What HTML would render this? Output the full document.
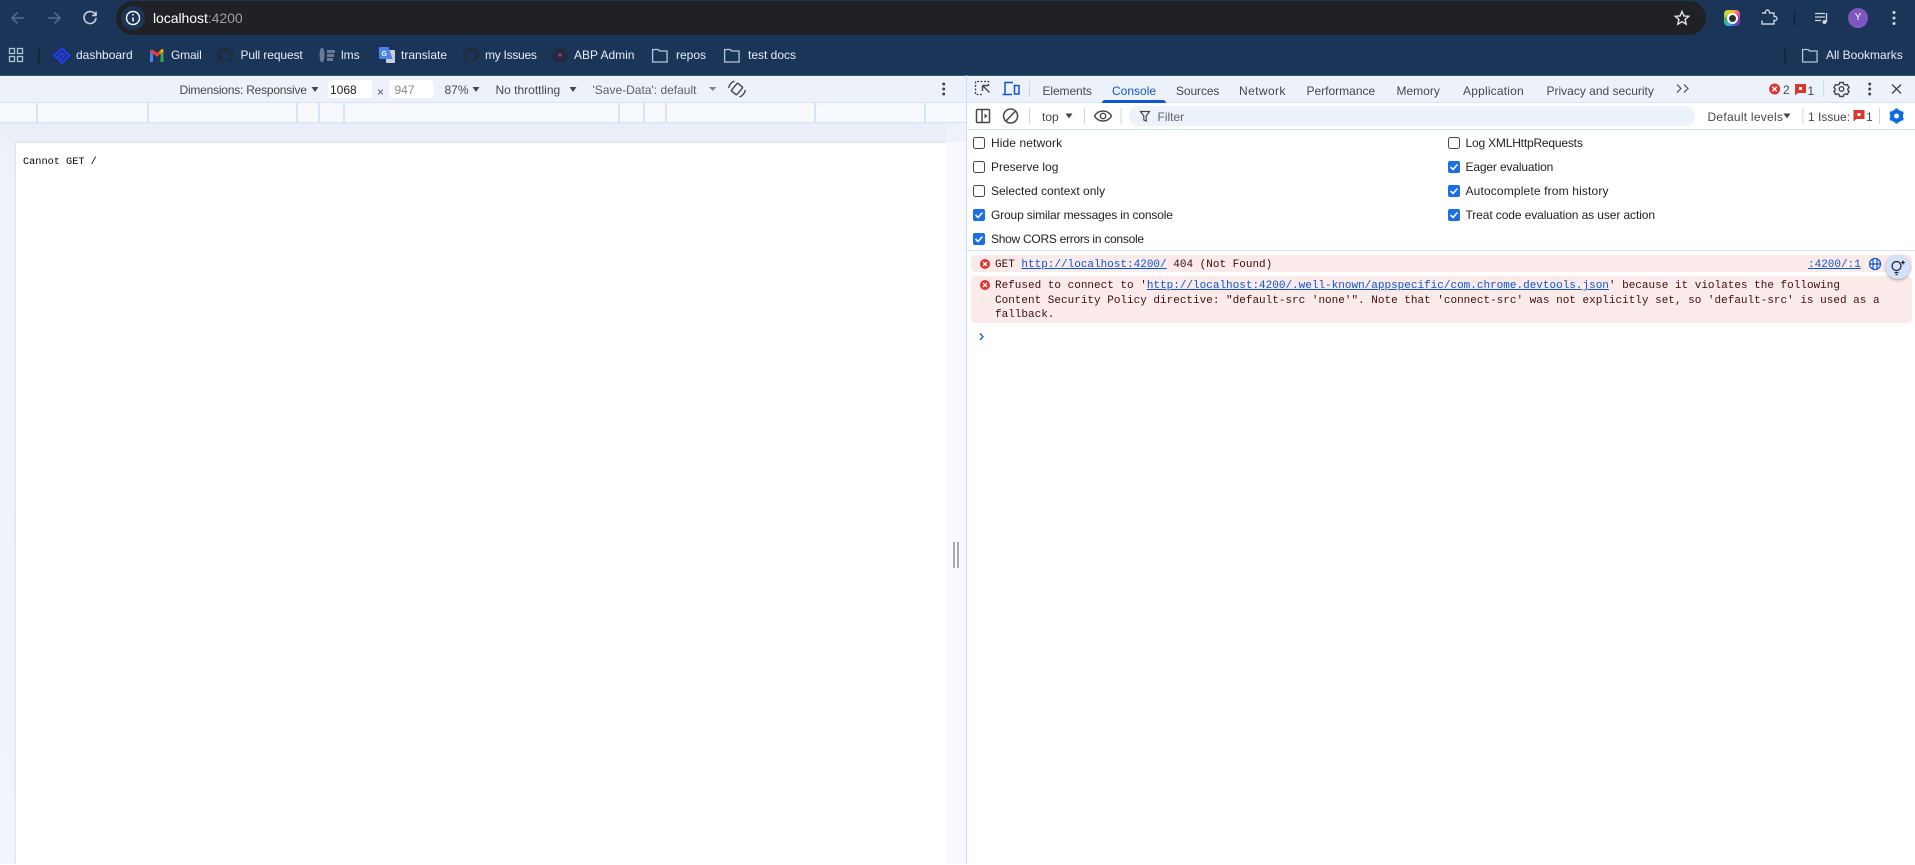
<!DOCTYPE html>
<html><head><meta charset="utf-8"><title>localhost:4200</title>
<style>
html,body{margin:0;padding:0;width:1915px;height:864px;overflow:hidden;background:#fff;font-family:"Liberation Sans",sans-serif;font-size:12px;color:#1f1f1f}
.b{position:absolute}
.t{position:absolute;white-space:nowrap;line-height:16px;height:16px}
.m{font-family:"Liberation Mono",monospace;font-size:11px;color:#410e0b}
.m a{color:#0b57d0;text-decoration:underline}
.w{color:#e8edf4}
.tb{color:#474747}
.dv{position:absolute;width:2px;top:103px;height:19px;background:#d3e3fd}
svg{position:absolute;left:0;top:0}
</style></head><body>
<div class="b" style="left:0;top:0;width:1915px;height:75px;background:#1a3558"></div>
<div class="b" style="left:116px;top:1px;width:1590px;height:34px;border-radius:17px;background:#202124"></div>
<div class="b" style="left:121px;top:6px;width:24px;height:24px;border-radius:12px;background:#1a3558"></div>
<div class="t" style="left:153px;top:10px;font-size:14px;color:#fff;letter-spacing:-.05px">localhost<span style="color:#9aa0a6">:4200</span></div>

<div class="t w" style="left:76px;top:47px">dashboard</div>
<div class="t w" style="left:171px;top:47px;letter-spacing:-.15px">Gmail</div>
<div class="t w" style="left:240.5px;top:47px;letter-spacing:-.1px">Pull request</div>
<div class="t w" style="left:341px;top:47px">lms</div>
<div class="t w" style="left:401px;top:47px">translate</div>
<div class="t w" style="left:485px;top:47px;letter-spacing:-.27px">my Issues</div>
<div class="t w" style="left:574px;top:47px">ABP Admin</div>
<div class="t w" style="left:676px;top:47px">repos</div>
<div class="t w" style="left:748px;top:47px">test docs</div>
<div class="t w" style="left:1826px;top:47px">All Bookmarks</div>

<div class="b" style="left:0;top:75px;width:967px;height:27px;background:#edf2fa;border-top:1px solid #3a5474;box-sizing:border-box"></div>
<div class="b" style="left:0;top:102px;width:967px;height:21px;background:#f8f9ff;border-top:1px solid #d3e3fd;border-bottom:1px solid #d3e3fd;box-sizing:border-box"></div>
<div class="dv" style="left:36px"></div><div class="dv" style="left:147px"></div><div class="dv" style="left:296px"></div><div class="dv" style="left:318px"></div><div class="dv" style="left:343px"></div><div class="dv" style="left:618px"></div><div class="dv" style="left:643px"></div><div class="dv" style="left:665px"></div><div class="dv" style="left:814px"></div><div class="dv" style="left:924px"></div>
<div class="b" style="left:0;top:123px;width:946px;height:741px;background:linear-gradient(#e9eef6,#eef2f9 30px,#f1f4fa)"></div>
<div class="b" style="left:946px;top:123px;width:20px;height:741px;background:#f8f9ff"></div>
<div class="b" style="left:946px;top:123px;width:20px;height:19px;background:#eef2f9"></div>
<div class="b" style="left:966px;top:75px;width:1px;height:789px;background:#c9dcf9"></div>
<div class="b" style="left:16px;top:142.500px;width:930px;height:722px;background:#fff;box-shadow:-1px -1px 1px rgba(0,0,0,.08)"></div>
<div class="t" style="left:23px;top:154px;font-family:'Liberation Mono',monospace;font-size:10.25px;color:#000">Cannot GET /</div>
<div class="b" style="left:953px;top:542px;width:2px;height:26px;background:#a8a9a8"></div>
<div class="b" style="left:957px;top:542px;width:2px;height:26px;background:#a8a9a8"></div>

<div class="t tb" style="left:179.500px;top:82px;letter-spacing:-.22px">Dimensions: Responsive</div>
<div class="b" style="left:328px;top:80px;width:44px;height:18px;background:#fff;border-radius:4px"></div>
<div class="b" style="left:389px;top:80px;width:44.500px;height:18px;background:#fff;border-radius:4px"></div>
<div class="t" style="left:330px;top:82px">1068</div>
<div class="t" style="left:377px;top:84px;color:#555">×</div>
<div class="t" style="left:394.500px;top:82px;color:#8a8a8a">947</div>
<div class="t tb" style="left:444.500px;top:82px">87%</div>
<div class="t tb" style="left:495.500px;top:82px">No throttling</div>
<div class="t tb" style="left:592.500px;top:82px;color:#5f5f5f">'Save-Data': default</div>

<div class="b" style="left:967px;top:75px;width:948px;height:27px;background:#edf2fa;border-top:1px solid #3a5474;box-sizing:border-box"></div>
<div class="b" style="left:967px;top:102px;width:948px;height:1px;background:#d3e3fd"></div>
<div class="b" style="left:967px;top:129px;width:948px;height:1px;background:#d3e3fd"></div>
<div class="b" style="left:967px;top:250px;width:948px;height:1px;background:#d3e3fd"></div>
<div class="t tb" style="left:1042.500px;top:83px;letter-spacing:-.1px">Elements</div>
<div class="t" style="left:1112px;top:83px;color:#0b57d0">Console</div>
<div class="b" style="left:1102px;top:100px;width:64px;height:3px;background:#0b57d0;border-radius:3px 3px 0 0"></div>
<div class="t tb" style="left:1176px;top:83px;letter-spacing:-.1px">Sources</div>
<div class="t tb" style="left:1239px;top:83px;letter-spacing:.4px">Network</div>
<div class="t tb" style="left:1306.500px;top:83px">Performance</div>
<div class="t tb" style="left:1396.500px;top:83px">Memory</div>
<div class="t tb" style="left:1463px;top:83px;letter-spacing:.2px">Application</div>
<div class="t tb" style="left:1546.500px;top:83px">Privacy and security</div>
<div class="t tb" style="left:1783px;top:82px">2</div>
<div class="t tb" style="left:1807.500px;top:83px">1</div>

<div class="t tb" style="left:1042px;top:109px">top</div>
<div class="b" style="left:1129px;top:106px;width:566px;height:20px;border-radius:10px;background:#edf2fa"></div>
<div class="t" style="left:1157.500px;top:109px;color:#5f6368">Filter</div>
<div class="t tb" style="left:1707.500px;top:109px;letter-spacing:.26px">Default levels</div>
<div class="t tb" style="left:1808px;top:109px">1 Issue:</div>
<div class="t tb" style="left:1866px;top:109px">1</div>

<div class="t" style="left:991px;top:135px;letter-spacing:.1px">Hide network</div>
<div class="t" style="left:991px;top:159px">Preserve log</div>
<div class="t" style="left:991px;top:183px">Selected context only</div>
<div class="t" style="left:991px;top:207px;letter-spacing:-.15px">Group similar messages in console</div>
<div class="t" style="left:991px;top:231px;letter-spacing:-.27px">Show CORS errors in console</div>
<div class="t" style="left:1465.500px;top:135px;letter-spacing:-.19px">Log XMLHttpRequests</div>
<div class="t" style="left:1465.500px;top:159px;letter-spacing:-.15px">Eager evaluation</div>
<div class="t" style="left:1465.500px;top:183px;letter-spacing:.15px">Autocomplete from history</div>
<div class="t" style="left:1465.500px;top:207px;letter-spacing:-.1px">Treat code evaluation as user action</div>

<div class="b" style="left:971px;top:255px;width:941px;height:17px;background:#fbeaea;border-radius:4px"></div>
<div class="b" style="left:971px;top:276px;width:941px;height:47px;background:#fbeaea;border-radius:4px"></div>
<div class="t m" style="left:995px;top:257px">GET <a>http://localhost:4200/</a> 404 (Not Found)</div>
<div class="t m" style="left:1808px;top:257px"><a>:4200/:1</a></div>
<div class="t m" style="left:995px;top:278px">Refused to connect to '<a>http://localhost:4200/.well-known/appspecific/com.chrome.devtools.json</a>' because it violates the following</div>
<div class="t m" style="left:995px;top:293px">Content Security Policy directive: "default-src 'none'". Note that 'connect-src' was not explicitly set, so 'default-src' is used as a</div>
<div class="t m" style="left:995px;top:307px">fallback.</div>
<div class="b" style="left:1886px;top:255px;width:24px;height:24px;border-radius:12px;background:#d3e3fd;box-shadow:0 1px 3px rgba(0,0,0,.35)"></div>

<div class="b" style="left:1724px;top:10px;width:16px;height:16px;border-radius:4px;background:conic-gradient(#f5c518,#f06292,#9c27b0,#3f51b5,#29b6f6,#4caf50,#cddc39,#f5c518)"></div>
<div class="b" style="left:1726.500px;top:12.500px;width:7px;height:7px;border-radius:50%;background:#263238;border:2px solid #fff"></div>
<div class="b" style="left:1848px;top:8px;width:20px;height:20px;border-radius:50%;background:#7e57c2"></div>
<div class="t" style="left:1848px;top:10px;width:20px;text-align:center;color:#fff;font-size:10px">Y</div>

<svg width="1915" height="864" viewBox="0 0 1915 864" fill="none">
<!-- nav -->
<g stroke="#516c8e" stroke-width="1.500">
<path d="M24 18H12.500M17.500 12.500L12 18l5.500 5.500"/>
<path d="M48 18h11.500M54.500 12.500L60 18l-5.500 5.500"/>
</g>
<path d="M95.200 14.500A6 6 0 1 0 96 18M96 11.500v4h-4" stroke="#c7cdd5" stroke-width="1.600"/>
<circle cx="133" cy="18" r="6.500" stroke="#fff" stroke-width="1.400"/>
<path d="M133 17.500v4M133 14v1.500" stroke="#fff" stroke-width="1.500"/>
<path d="M1682 11.500l1.900 4.400 4.800.4-3.600 3.200 1.100 4.700-4.200-2.500-4.200 2.500 1.100-4.700-3.600-3.200 4.800-.4z" stroke="#e3e6ea" stroke-width="1.400"/>
<path d="M1762 14h3.500v-1a2 2 0 0 1 4 0v1h4.500v3.500h1a2 2 0 0 1 0 4h-1V25h-12v-3.500" stroke="#c7d0dc" stroke-width="1.400" transform="translate(0,-1)"/>
<path d="M1794.500 10v16" stroke="#0f2238" stroke-width="1.200"/>
<g stroke="#d2d8e0" stroke-width="1.300"><path d="M1815 13.500h10M1815 17h10M1815 20.500h6M1826.500 13v9"/></g>
<circle cx="1824.500" cy="22" r="2" fill="#d2d8e0"/>
<g fill="#d2d8e0"><circle cx="1894" cy="12.500" r="1.500"/><circle cx="1894" cy="18" r="1.500"/><circle cx="1894" cy="23.500" r="1.500"/></g>
<!-- bookmarks -->
<g stroke="#b6c4d8" stroke-width="1.300"><rect x="9.500" y="48.500" width="5" height="5"/><rect x="17.500" y="48.500" width="5" height="5"/><rect x="9.500" y="56.500" width="5" height="5"/><rect x="17.500" y="56.500" width="5" height="5"/></g>
<path d="M39 47v16" stroke="#0f2238" stroke-width="1.400"/>
<path d="M1785 47v16" stroke="#0f2238" stroke-width="1.400"/>
<g stroke="#1f3ff0" stroke-width="2"><path d="M62 48l7.500 7.500-7.500 7.500-7.500-7.500 7.500-7.500"/><path d="M62 53l2.500 2.500-5 5M62 53l-5 5"/></g>
<path d="M150 62h3V54l-3-2.500z" fill="#4285f4"/><path d="M160.500 62h3V51.500l-3 2.500z" fill="#34a853"/>
<path d="M150 51.500c0-1.800 2-2.400 3-1.500l3.800 3 3.800-3c1-.9 3-.3 3 1.500v0l-6.800 5.300z" fill="#ea4335"/>
<path d="M160.500 50l1-.7c1-.7 2 0 2 1.500v.7l-3 2.500z" fill="#fbbc04"/>
<g fill="#222c38" transform="translate(217.700,47)"><path d="M8 0C3.580 0 0 3.580 0 8c0 3.540 2.290 6.530 5.470 7.590.4.070.55-.17.55-.38 0-.19-.01-.82-.01-1.490-2.010.37-2.530-.49-2.690-.94-.09-.23-.48-.94-.82-1.130-.28-.15-.68-.52-.01-.53.630-.01 1.080.58 1.230.82.720 1.210 1.870.87 2.330.66.070-.52.280-.87.510-1.070-1.780-.2-3.640-.89-3.640-3.950 0-.87.310-1.590.82-2.150-.08-.2-.36-1.020.08-2.120 0 0 .67-.21 2.200.82.640-.18 1.320-.27 2-.27.68 0 1.360.09 2 .27 1.530-1.040 2.200-.82 2.200-.82.44 1.100.16 1.920.08 2.120.51.56.82 1.270.82 2.150 0 3.070-1.870 3.750-3.650 3.950.29.25.54.73.54 1.480 0 1.070-.01 1.930-.01 2.200 0 .21.15.46.55.38A8.013 8.013 0 0016 8c0-4.420-3.580-8-8-8z"/></g>
<g fill="#222c38" transform="translate(462.600,47)"><path d="M8 0C3.580 0 0 3.580 0 8c0 3.540 2.290 6.530 5.470 7.590.4.070.55-.17.55-.38 0-.19-.01-.82-.01-1.490-2.010.37-2.530-.49-2.690-.94-.09-.23-.48-.94-.82-1.130-.28-.15-.68-.52-.01-.53.630-.01 1.080.58 1.230.82.720 1.210 1.870.87 2.330.66.070-.52.280-.87.510-1.070-1.780-.2-3.640-.89-3.640-3.950 0-.87.310-1.590.82-2.150-.08-.2-.36-1.020.08-2.120 0 0 .67-.21 2.200.82.640-.18 1.320-.27 2-.27.68 0 1.360.09 2 .27 1.530-1.040 2.200-.82 2.200-.82.44 1.100.16 1.920.08 2.120.51.56.82 1.270.82 2.150 0 3.070-1.870 3.750-3.650 3.950.29.25.54.73.54 1.480 0 1.070-.01 1.930-.01 2.200 0 .21.15.46.55.38A8.013 8.013 0 0016 8c0-4.420-3.580-8-8-8z"/></g>
<g fill="#7d8da3" opacity=".8"><ellipse cx="322" cy="55" rx="2.500" ry="7.500"/><rect x="327" y="50" width="8" height="3"/><rect x="327" y="54" width="7" height="3"/><rect x="327" y="58" width="6" height="3"/></g>
<rect x="386" y="50" width="9" height="13" rx="1" fill="#c9ced6"/>
<path d="M380.500 47h8l4 12h-12a1.500 1.500 0 0 1-1.500-1.500v-9a1.500 1.500 0 0 1 1.500-1.500z" fill="#4a86e8"/>
<text x="381.500" y="56" font-family="Liberation Sans,sans-serif" font-size="7" font-weight="700" fill="#fff">G</text>
<circle cx="560" cy="55" r="8" fill="#232c3e"/><circle cx="560" cy="55" r="1.500" fill="#c22f9d"/>
<g stroke="#b8c4d3" stroke-width="1.300"><path d="M652.600 49.500h5.500l1.500 1.500h7.500v11h-14.500z"/><path d="M724.600 49.500h5.500l1.500 1.500h7.500v11h-14.500z"/><path d="M1802.600 49.500h5.500l1.500 1.500h7.500v11h-14.500z"/></g>
<!-- device toolbar carets -->
<g fill="#474747"><path d="M311.500 87h7l-3.500 5z"/><path d="M472.500 87h7l-3.500 5z"/><path d="M569.500 87h7l-3.500 5z"/><path d="M1065.500 113.500h7l-3.500 5z"/><path d="M1783.500 113.500h7l-3.500 5z"/></g>
<path d="M709 87h7.500l-3.750 4z" fill="#80868b"/>
<g stroke="#474747" stroke-width="1.500" transform="rotate(40 737 89)"><rect x="733.500" y="84" width="7" height="10" rx="1"/><path d="M730 84.500a8.500 8.500 0 0 0 0 9M744 84.500a8.500 8.500 0 0 1 0 9"/></g>
<g fill="#474747"><circle cx="943.700" cy="84" r="1.500"/><circle cx="943.700" cy="89" r="1.500"/><circle cx="943.700" cy="94" r="1.500"/>
<circle cx="1869.700" cy="84" r="1.500"/><circle cx="1869.700" cy="89" r="1.500"/><circle cx="1869.700" cy="94" r="1.500"/></g>
<!-- devtools icons -->
<path d="M982 94.500h-6.500v-13h13v6" stroke="#474747" stroke-width="1.300" stroke-dasharray="2 1.500"/>
<path d="M982.500 85.500l7 7M982.500 85.500v5.500M982.500 85.500h5.500" stroke="#474747" stroke-width="1.400"/>
<g stroke="#0b57d0" stroke-width="1.500"><path d="M1005 94V82.500h8M1002.500 94.500h9.500"/><rect x="1014.500" y="85.500" width="4.500" height="8.500"/></g>
<path d="M1029.500 81v16M1029.500 108v16M1084.500 108v16M1121 108v16M1802.800 108v16M1879.500 108v16M1823.600 81v16" stroke="#c7d7ee"/>
<path d="M1677 84.500l4 4-4 4M1684 84.500l4 4-4 4" stroke="#5f6368" stroke-width="1.300"/>
<g stroke="#474747" stroke-width="1.500"><rect x="976.500" y="109.500" width="13" height="13" rx="1"/><path d="M982 109.500v13"/></g><path d="M984.500 113.500l3 2.500-3 2.500z" fill="#474747"/>
<g stroke="#474747" stroke-width="1.500"><circle cx="1010.600" cy="116" r="7"/><path d="M1006 121l9.500-10"/></g>
<path d="M1094.500 116c2-3.500 5-5 8.500-5s6.500 1.500 8.500 5c-2 3.500-5 5-8.500 5s-6.500-1.500-8.500-5z" stroke="#474747" stroke-width="1.400"/><circle cx="1103" cy="116" r="2.700" stroke="#474747" stroke-width="1.400"/>
<path d="M1140.500 111.500h9l-3.300 4.500v5l-2.400-1v-4z" stroke="#474747" stroke-width="1.200"/>
<!-- counts -->
<g><circle cx="1774.600" cy="89" r="5.500" fill="#dc362e"/><path d="M1772.400 86.800l4.400 4.400M1776.800 86.800l-4.400 4.400" stroke="#fff" stroke-width="1.400"/></g>
<path d="M1795 84h11v9h-8l-3 2.500z" fill="#dc362e"/><rect x="1799" y="87" width="3" height="3" fill="#fff"/>
<path d="M1853.500 110h11v9h-8l-3 2.500z" fill="#dc362e"/><rect x="1857.500" y="113" width="3" height="3" fill="#fff"/>
<g stroke="#474747" stroke-width="1.400"><circle cx="1841.500" cy="89" r="2.300"/><path d="M1839.700 82.500h3.600l.5 1.700 1.800.9 1.700-.5 1.800 3-1.300 1.300v1.200l1.300 1.300-1.800 3-1.700-.5-1.800.9-.5 1.700h-3.600l-.5-1.700-1.800-.9-1.700.5-1.800-3 1.300-1.300v-1.200l-1.300-1.300 1.800-3 1.700.5 1.800-.9z"/></g>
<path d="M1892 84.500l9 9M1901 84.500l-9 9" stroke="#474747" stroke-width="1.400"/>
<circle cx="1896.600" cy="116" r="4.500" stroke="#0b6be0" stroke-width="4"/>
<g stroke="#0b6be0" stroke-width="3"><path d="M1896.600 108.500v3M1896.600 120.500v3M1890 112.300l2.600 1.500M1900.600 118.200l2.600 1.500M1890 119.700l2.600-1.500M1900.600 113.800l2.600-1.500"/></g>
<!-- checkboxes -->
<g stroke="#474747" stroke-width="1" fill="#fff">
<rect x="973.500" y="137.500" width="11" height="11" rx="2"/><rect x="973.500" y="161.500" width="11" height="11" rx="2"/><rect x="973.500" y="185.500" width="11" height="11" rx="2"/><rect x="1448.500" y="137.500" width="11" height="11" rx="2"/></g>
<g fill="#1a6fe8"><rect x="973" y="209" width="12" height="12" rx="2"/><rect x="973" y="233" width="12" height="12" rx="2"/><rect x="1448" y="161" width="12" height="12" rx="2"/><rect x="1448" y="185" width="12" height="12" rx="2"/><rect x="1448" y="209" width="12" height="12" rx="2"/></g>
<g stroke="#fff" stroke-width="1.600"><path d="M975.500 215l2.500 2.500 4.500-5M975.500 239l2.500 2.500 4.500-5M1450.500 167l2.500 2.500 4.500-5M1450.500 191l2.500 2.500 4.500-5M1450.500 215l2.500 2.500 4.500-5"/></g>
<!-- message icons -->
<circle cx="985" cy="264" r="5" fill="#dc362e"/><path d="M983 262l4 4M987 262l-4 4" stroke="#fff" stroke-width="1.300"/>
<circle cx="985" cy="285" r="5" fill="#dc362e"/><path d="M983 283l4 4M987 283l-4 4" stroke="#fff" stroke-width="1.300"/>
<path d="M980 333.500l3 3.200-3 3.200" stroke="#0b57d0" stroke-width="1.300"/>
<g stroke="#0b57d0" stroke-width="1.200"><circle cx="1875" cy="264" r="5.500"/><path d="M1873 259.500v9M1877 259.500v9M1870 264h10"/></g>
<g stroke="#1f1f1f" stroke-width="1.200"><circle cx="1896.500" cy="266" r="4.500"/><path d="M1894.500 272.500h4M1895.500 274.500h2"/></g>
<path d="M1903 260l.8 1.700 1.700.8-1.700.8-.8 1.700-.8-1.700-1.700-.8 1.700-.8z" fill="#1f1f1f"/>
</svg>
</body></html>
